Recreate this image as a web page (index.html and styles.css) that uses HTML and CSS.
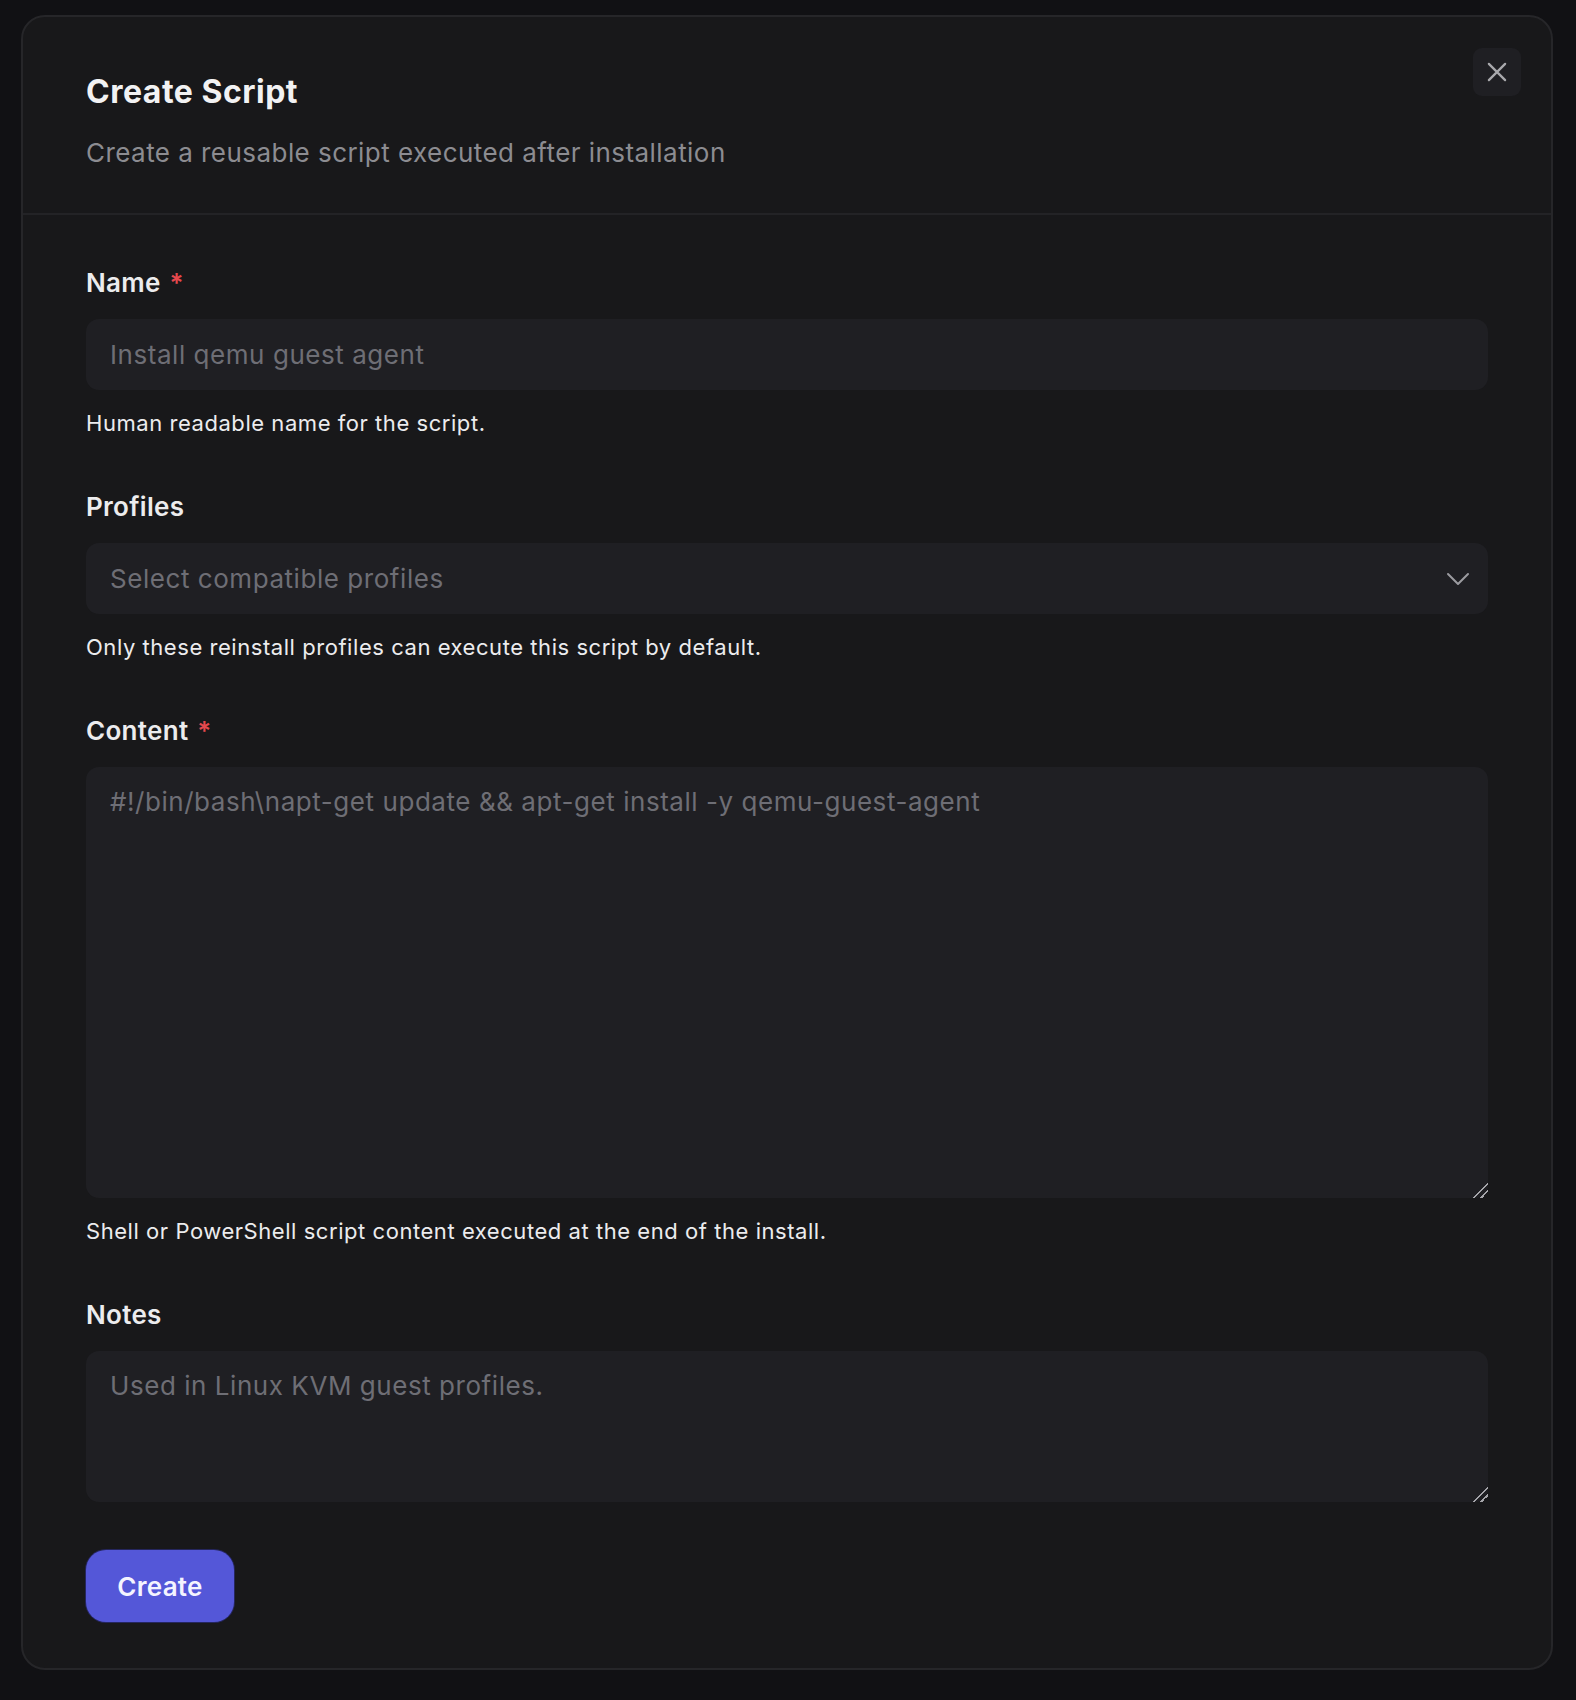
FILE: index.html
```html
<!DOCTYPE html>
<html lang="en">
<head>
  <meta charset="UTF-8">
  <title>Create Script</title>
  <link rel="stylesheet" href="styles.css">
</head>
<body>

  <div class="modal">
    <div class="modal-header">
      <div class="header-text">
        <h1>Create Script</h1>
        <p class="subtitle">Create a reusable script executed after installation</p>
      </div>
      <button class="close-btn" type="button" aria-label="Close">
        <svg width="30" height="30" viewBox="0 0 24 24" fill="none" stroke="currentColor" stroke-width="1.8" stroke-linecap="round">
          <path d="M5.5 5.5l13 13M18.5 5.5l-13 13"/>
        </svg>
      </button>
    </div>

    <form class="modal-body">
      <div class="field">
        <label for="name">Name <span class="req">*</span></label>
        <input type="text" id="name" placeholder="Install qemu guest agent">
        <p class="help">Human readable name for the script.</p>
      </div>

      <div class="field">
        <label>Profiles</label>
        <div class="select">
          <span class="select-placeholder">Select compatible profiles</span>
          <svg width="24" height="24" viewBox="0 0 24 24" fill="none" stroke="currentColor" stroke-width="2" stroke-linecap="round" stroke-linejoin="round">
            <path d="M2 7l10 10 10-10"/>
          </svg>
        </div>
        <p class="help">Only these reinstall profiles can execute this script by default.</p>
      </div>

      <div class="field">
        <label for="content">Content <span class="req">*</span></label>
        <textarea id="content" class="content-area" placeholder="#!/bin/bash\napt-get update &amp;&amp; apt-get install -y qemu-guest-agent"></textarea>
        <p class="help">Shell or PowerShell script content executed at the end of the install.</p>
      </div>

      <div class="field">
        <label for="notes">Notes</label>
        <textarea id="notes" class="notes-area" placeholder="Used in Linux KVM guest profiles."></textarea>
      </div>

      <button type="submit" class="create-btn">Create</button>
    </form>
  </div>

</body>
</html>
```

FILE: styles.css
```css
* {
  box-sizing: border-box;
}

body {
  margin: 0;
  background: #111114;
  font-family: Inter, Lato, sans-serif;
  color: #ececee;
  padding: 15px 23px 30px 21px;
}

.modal {
  background: #18181a;
  border: 2px solid #262629;
  border-radius: 24px;
}

.modal-header {
  display: flex;
  justify-content: space-between;
  align-items: flex-start;
  padding: 31px 30px 0 63px;
  height: 198px;
  border-bottom: 2px solid #232326;
}

.header-text {
  padding-top: 25px;
}

h1 {
  margin: 0;
  font-size: 32px;
  line-height: 38px;
  letter-spacing: 0.5px;
  font-weight: 700;
  color: #f2f2f3;
}

.subtitle {
  margin: 27px 0 0;
  font-size: 26px;
  line-height: 30px;
  letter-spacing: 0.45px;
  color: #8c8c91;
}

.close-btn {
  width: 48px;
  height: 48px;
  border: none;
  border-radius: 9px;
  background: #1f1f23;
  color: #a9a9ad;
  display: flex;
  align-items: center;
  justify-content: center;
  cursor: pointer;
  padding: 0;
}

.modal-body {
  padding: 53px 63px 46px 63px;
}

.field {
  margin-bottom: 57px;
}

.field label {
  display: block;
  font-size: 26px;
  line-height: 30px;
  letter-spacing: 0.3px;
  font-weight: 600;
  color: #ececee;
  margin-bottom: 21px;
}

.req {
  color: #e5484d;
  margin-left: 2px;
}

.field input,
.field textarea,
.select {
  width: 100%;
  background: #1f1f23;
  border: none;
  border-radius: 13px;
  font-family: inherit;
  font-size: 26px;
  letter-spacing: 0.55px;
  color: #ececee;
  color-scheme: dark;
  outline: none;
}

.field input,
.select {
  height: 71px;
  padding: 0 24px;
}

.field input::placeholder,
.field textarea::placeholder {
  color: #6e6e75;
}

.select {
  display: flex;
  align-items: center;
  justify-content: space-between;
  padding-right: 18px;
}

.select-placeholder {
  color: #6e6e75;
}

.select svg {
  color: #9b9ba0;
}

.field textarea {
  display: block;
  padding: 19px 24px;
  line-height: 32px;
  resize: vertical;
}

.field textarea::-webkit-resizer {
  background: linear-gradient(135deg, transparent 48%, #a5a5aa 48%, #a5a5aa 56%, transparent 56%, transparent 72%, #a5a5aa 72%, #a5a5aa 80%, transparent 80%);
}

.content-area {
  height: 431px;
}

.notes-area {
  height: 151px;
}

.field:last-of-type {
  margin-bottom: 48px;
}

.help {
  margin: 21px 0 0;
  font-size: 22px;
  line-height: 24px;
  letter-spacing: 0.55px;
  color: #ececee;
}

.create-btn {
  width: 148px;
  height: 72px;
  border: none;
  border-radius: 20px;
  background: #5457d8;
  box-shadow: 0 0 0 1px #25265e;
  color: #f4f4ff;
  font-family: inherit;
  font-size: 26px;
  letter-spacing: 0.3px;
  font-weight: 600;
  cursor: pointer;
}
```
